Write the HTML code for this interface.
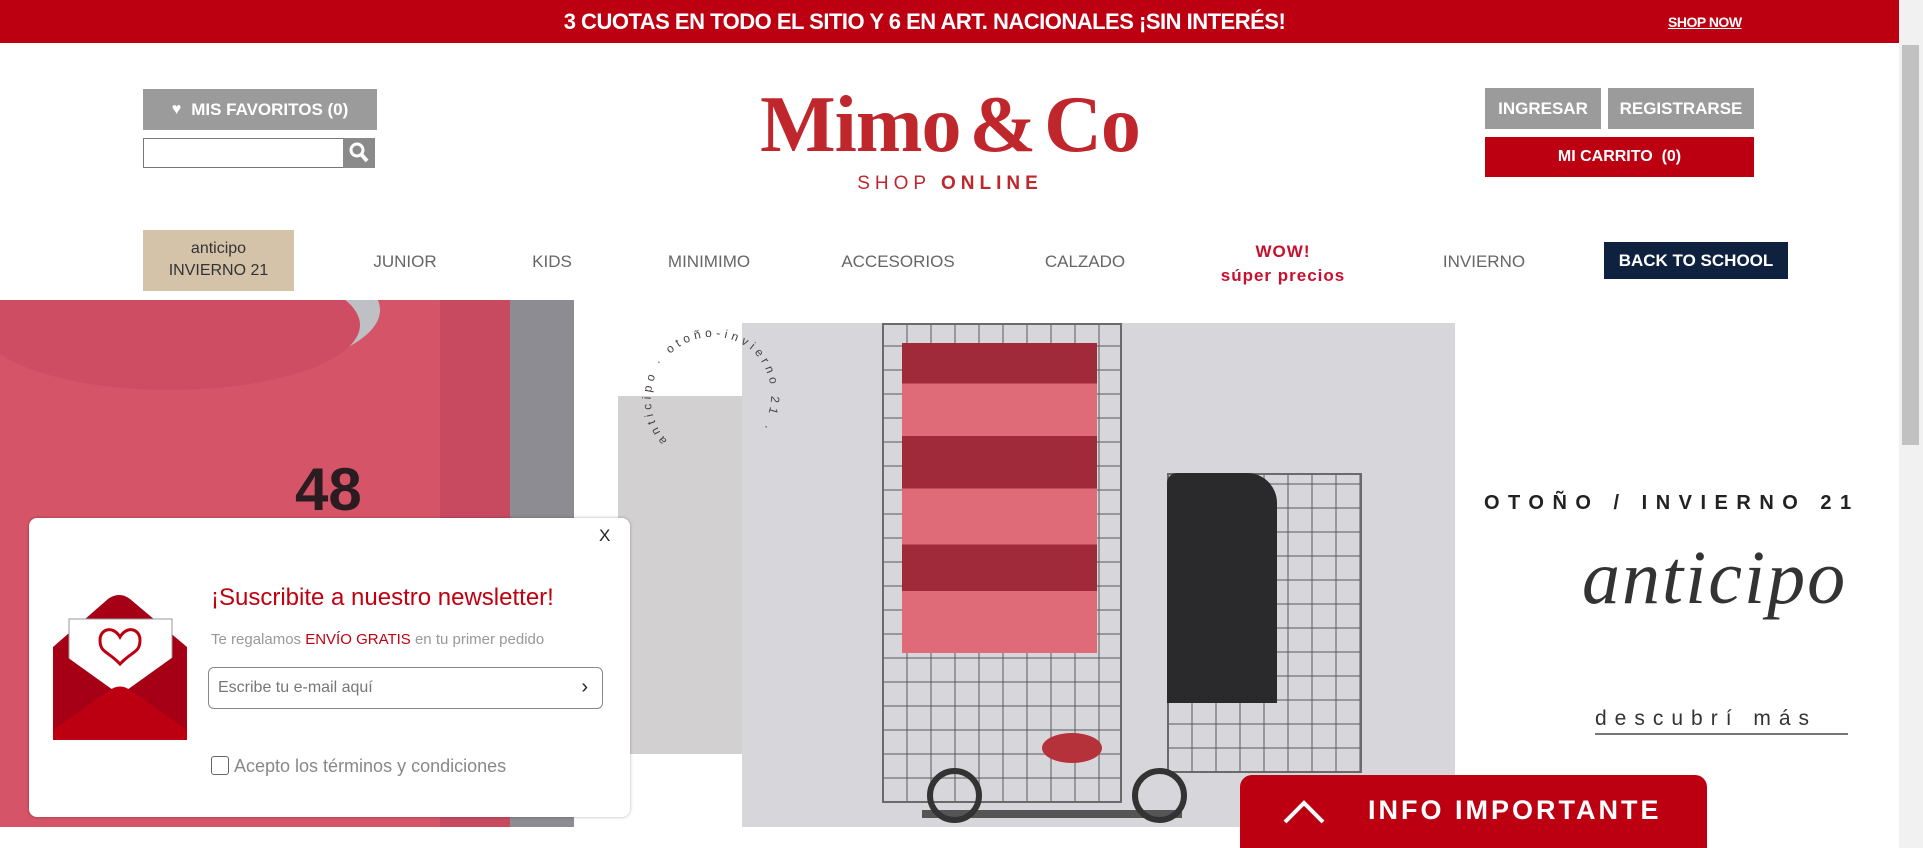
<!DOCTYPE html>
<html><head><meta charset="utf-8">
<style>
*{margin:0;padding:0;box-sizing:border-box}
body{width:1923px;height:848px;overflow:hidden;background:#fff;font-family:"Liberation Sans","DejaVu Sans",sans-serif;position:relative}
.a{position:absolute}
.top{left:0;top:0;width:1899px;height:43px;background:#bd0011;color:#fff}
.btn{position:absolute;color:#fff;font-weight:bold;display:flex;align-items:center;justify-content:center;font-size:17px}
.nav{position:absolute;top:252px;font-size:17px;color:#666;transform:translateX(-50%);white-space:nowrap}
</style></head><body>
<div class="a top">
 <div class="a" style="left:0;width:1899px;top:9px;text-align:center;font-weight:bold;font-size:22px;letter-spacing:-0.5px;padding-right:50px">3 CUOTAS EN TODO EL SITIO Y 6 EN ART. NACIONALES ¡SIN INTERÉS!</div>
 <div class="a" style="left:1668px;top:14px;font-size:14px;font-weight:bold;text-decoration:underline;letter-spacing:-0.5px">SHOP NOW</div>
</div>
<div class="a" style="left:1899px;top:0;width:24px;height:848px;background:#f1f1f1"></div>
<div class="a" style="left:1902px;top:45px;width:17px;height:400px;background:#c1c1c1"></div>

<div class="btn" style="left:143px;top:89px;width:234px;height:41px;background:#9b9b9b"><span style="font-size:16px;margin-right:10px">♥</span>MIS FAVORITOS (0)</div>
<div class="a" style="left:143px;top:138px;width:200px;height:30px;border:1px solid #777;border-right:none"></div>
<div class="a" style="left:343px;top:138px;width:32px;height:30px;background:#8a8a8a"><svg width="32" height="30"><circle cx="14" cy="12" r="6" stroke="#fff" stroke-width="3" fill="none"/><line x1="18" y1="16" x2="24" y2="23" stroke="#fff" stroke-width="4"/></svg></div>

<div class="a" style="left:700px;top:80px;width:500px;text-align:center;font-family:'Liberation Serif',serif;font-weight:bold;font-size:80px;color:#c0272d;letter-spacing:-1px;word-spacing:-10px;line-height:90px;white-space:nowrap">Mimo &amp; Co</div>
<div class="a" style="left:840px;top:173px;width:220px;text-align:center;font-size:19px;color:#c0272d;letter-spacing:5px;white-space:nowrap">SHOP <b>ONLINE</b></div>

<div class="btn" style="left:1485px;top:88px;width:116px;height:41px;background:#9b9b9b">INGRESAR</div>
<div class="btn" style="left:1608px;top:88px;width:146px;height:41px;background:#9b9b9b">REGISTRARSE</div>
<div class="btn" style="left:1485px;top:137px;width:269px;height:40px;background:#bd0011;font-size:16px">MI CARRITO &nbsp;(0)</div>

<div class="a" style="left:143px;top:230px;width:151px;height:61px;background:#d4c3a8;color:#333;font-size:16px;text-align:center;line-height:22px;padding-top:8px">anticipo<br>INVIERNO 21</div>
<div class="nav" style="left:405px">JUNIOR</div>
<div class="nav" style="left:552px">KIDS</div>
<div class="nav" style="left:709px">MINIMIMO</div>
<div class="nav" style="left:898px">ACCESORIOS</div>
<div class="nav" style="left:1085px">CALZADO</div>
<div class="nav" style="left:1283px;top:240px;color:#c8102e;font-weight:bold;text-align:center;line-height:24px;font-size:17px;letter-spacing:1px">WOW!<br>súper precios</div>
<div class="nav" style="left:1484px">INVIERNO</div>
<div class="btn" style="left:1604px;top:242px;width:184px;height:37px;background:#0e2240;font-size:17px">BACK TO SCHOOL</div>

<!-- left photo -->
<div class="a" style="left:0;top:300px;width:574px;height:527px;background:#d65468;overflow:hidden">
 <div class="a" style="left:500px;top:0;width:74px;height:527px;background:#8d8c92"></div>
 <div class="a" style="left:440px;top:0;width:70px;height:527px;background:#c84a60"></div>
 <div class="a" style="left:-40px;top:-60px;width:420px;height:140px;border-radius:50%;background:#bfc0c6"></div>
 <div class="a" style="left:-20px;top:-40px;width:380px;height:130px;border-radius:50%;background:#cf4d63"></div>
 <div class="a" style="left:295px;top:155px;font-size:60px;font-weight:bold;color:#2a1c20">48</div>
</div>
<!-- gray rect -->
<div class="a" style="left:618px;top:396px;width:124px;height:358px;background:#d2d0d1"></div>
<!-- main photo -->
<div class="a" style="left:742px;top:323px;width:713px;height:504px;background:#d7d7db;overflow:hidden">
 <div class="a" style="left:140px;top:0;width:240px;height:480px;border:2px solid #6b6a6a;background:repeating-linear-gradient(90deg,transparent 0 22px,rgba(90,90,90,.5) 22px 24px),repeating-linear-gradient(0deg,transparent 0 22px,rgba(90,90,90,.5) 22px 24px)"></div>
 <div class="a" style="left:425px;top:150px;width:195px;height:300px;border:2px solid #6b6a6a;background:repeating-linear-gradient(90deg,transparent 0 22px,rgba(90,90,90,.5) 22px 24px),repeating-linear-gradient(0deg,transparent 0 22px,rgba(90,90,90,.5) 22px 24px)"></div>
 <div class="a" style="left:160px;top:20px;width:195px;height:310px;background:linear-gradient(#a02a3a 0 13%,#e06b78 13% 30%,#a02a3a 30% 47%,#e06b78 47% 65%,#a02a3a 65% 80%,#e06b78 80%)"></div>
 <div class="a" style="left:425px;top:150px;width:110px;height:230px;background:#2a2a2c;border-radius:10px 30px 0 0"></div>
 <div class="a" style="left:180px;top:420px;width:260px;height:75px;border-bottom:8px solid #555"></div>
 <div class="a" style="left:185px;top:445px;width:55px;height:55px;border-radius:50%;border:6px solid #333"></div>
 <div class="a" style="left:390px;top:445px;width:55px;height:55px;border-radius:50%;border:6px solid #333"></div>
 <div class="a" style="left:300px;top:410px;width:60px;height:30px;border-radius:50%;background:#b5323a"></div>
</div>
<svg class="a" style="left:641px;top:327px" width="140" height="140"><defs><path id="c" d="M26.2,113.8 A62,62 0 0,1 113.8,26.2 A62,62 0 0,1 26.2,113.8"/></defs><text font-family="Liberation Sans,sans-serif" font-size="12" fill="#444" letter-spacing="4"><textPath href="#c">anticipo · otoño-invierno 21 ·</textPath></text></svg>
<!-- right text -->
<div class="a" style="left:1484px;top:492px;font-size:20px;font-weight:bold;letter-spacing:8.5px;color:#222;white-space:nowrap">OTOÑO / INVIERNO 21</div>
<div class="a" style="left:1582px;top:535px;font-family:'Liberation Serif',serif;font-style:italic;font-size:76px;color:#333;letter-spacing:2px">anticipo</div>
<div class="a" style="left:1595px;top:707px;font-size:21px;letter-spacing:8px;color:#333;border-bottom:2px solid #777;padding-bottom:2px;width:253px;white-space:nowrap">descubrí más</div>

<!-- popup -->
<div class="a" style="left:29px;top:518px;width:601px;height:299px;background:#fff;border-radius:8px;box-shadow:0 0 3px rgba(0,0,0,.3)">
 <div class="a" style="left:570px;top:8px;font-size:17px;color:#222">X</div>
 <svg class="a" style="left:24px;top:77px" width="134" height="145" viewBox="0 0 134 145"><path d="M0,52 L55,4 Q66,-4 77,4 L134,52 L134,145 L0,145Z" fill="#a50015"/><rect x="16" y="24" width="103" height="90" fill="#fff" stroke="#999" stroke-width="1"/><path d="M0,52 L67,100 L134,52 L134,145 L0,145Z" fill="#a50015"/><path d="M0,135 L57,95 Q67,88 77,95 L134,135 L134,145 L0,145Z" fill="#bd0011"/><path d="M67,69 C55,56 47,58 47,45 C47,34 60,30 67,42 C74,30 87,34 87,45 C87,58 79,56 67,69Z" fill="none" stroke="#bd0011" stroke-width="3"/></svg>
 <div class="a" style="left:182px;top:66px;font-size:24px;color:#c0000f;white-space:nowrap">¡Suscribite a nuestro newsletter!</div>
 <div class="a" style="left:182px;top:113px;font-size:15px;color:#999;white-space:nowrap">Te regalamos <span style="color:#c0000f">ENVÍO GRATIS</span> en tu primer pedido</div>
 <div class="a" style="left:179px;top:149px;width:395px;height:42px;border:1px solid #888;border-radius:6px;font-size:16px;color:#777;padding:11px 9px">Escribe tu e-mail aquí<span style="position:absolute;right:14px;top:8px;color:#222;font-size:20px">›</span></div>
 <div class="a" style="left:182px;top:238px;width:18px;height:19px;border:1px solid #666;border-radius:3px"></div>
 <div class="a" style="left:205px;top:238px;font-size:18px;color:#888;white-space:nowrap">Acepto los términos y condiciones</div>
</div>

<div class="a" style="left:1240px;top:775px;width:467px;height:73px;background:#bd0011;border-radius:12px 12px 0 0;color:#fff">
 <svg class="a" style="left:42px;top:22px" width="44" height="28"><polyline points="3,25 22,6 41,25" fill="none" stroke="#fff" stroke-width="4"/></svg>
 <div class="a" style="left:128px;top:20px;font-size:27px;font-weight:bold;letter-spacing:3px;white-space:nowrap">INFO IMPORTANTE</div>
</div>
</body></html>
